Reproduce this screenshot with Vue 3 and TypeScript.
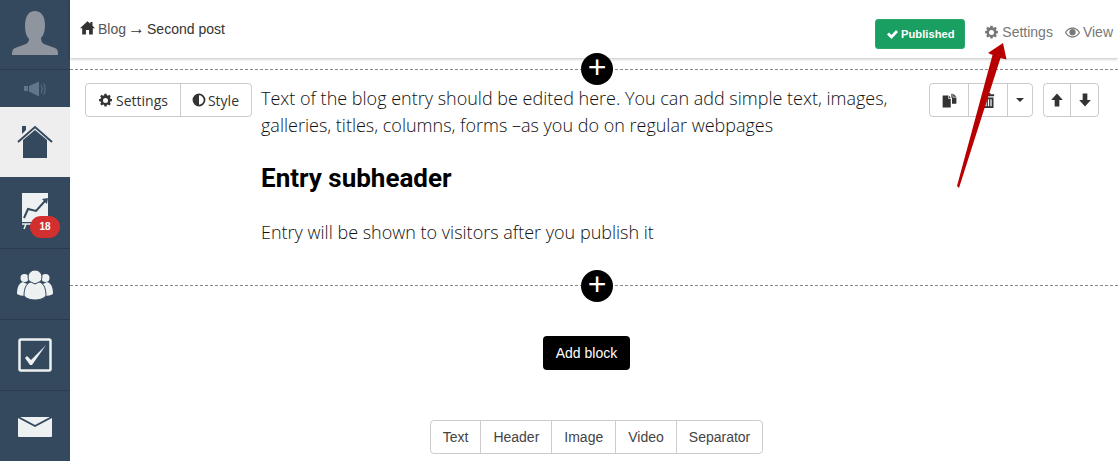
<script setup lang="ts">
const tabs = ['Text', 'Header', 'Image', 'Video', 'Separator'];
const gear =
  'M10.3 1h3.4l.5 2.6 1.7.7 2.2-1.5 2.4 2.4-1.5 2.2.7 1.7 2.6.5v3.4l-2.6.5-.7 1.7 1.5 2.2-2.4 2.4-2.2-1.5-1.7.7-.5 2.6h-3.4l-.5-2.6-1.7-.7-2.2 1.5-2.4-2.4 1.5-2.2-.7-1.7-2.6-.5v-3.4l2.6-.5.7-1.7-1.500-2.2 2.4-2.4 2.2 1.5 1.7-.7zM12 8a4 4 0 1 0 0 8 4 4 0 0 0 0-8z';
</script>

<template>
  <div class="page">
    <aside class="sidebar">
      <div class="side-item avatar">
        <svg width="48" height="46" viewBox="0 0 48 46">
          <path fill="#8e959f" d="M1 45c0-5 1-6 3-7l11-4c2-1 3-3 3-5-3-3-4-8-4-13C14 6 18 1 24 1s10 5 10 14c0 5-1 10-4 13 0 3 1 5 3 6l11 4c2 1 3 2 3 7z" />
        </svg>
      </div>
      <div class="side-item speaker">
        <svg width="22" height="16" viewBox="0 0 22 16">
          <path fill="#62768a" d="M0 5h4v5H0zM5 5l10-4.500v15L5 10.500z" />
          <path fill="none" stroke="#62768a" d="M17 4c1.500 2 1.500 6 0 8M19.500 2.500c2 3 2 8 0 11" />
        </svg>
      </div>
      <div class="side-item active">
        <svg width="36" height="34" viewBox="0 0 36 34">
          <path fill="#34495e" d="M5 1h4v4l-4 4zM6 33V15L18 5l12 10v18z" />
          <path fill="none" stroke="#34495e" stroke-width="2" d="M1 17 18 2l17 15" />
        </svg>
      </div>
      <div class="side-item">
        <svg width="28" height="40" viewBox="0 0 28 40">
          <path fill="#edf1f2" d="M1 0h26v29H1z" />
          <path fill="none" stroke="#34495e" stroke-width="2" d="M3 25 7 16l8 2 9-10" />
          <path fill="#34495e" d="m21 6 6-1-1 6z" />
          <path fill="none" stroke="#edf1f2" stroke-width="1.500" d="M1 31h9M5 31l-2 5" />
        </svg>
        <span class="badge">18</span>
      </div>
      <div class="side-item">
        <svg width="36" height="31" viewBox="0 0 36 31">
          <g fill="#edf1f2">
            <circle cx="7.500" cy="9" r="4" />
            <circle cx="28.500" cy="9" r="4" />
            <path d="M0 25c0-7 2-11 6-12l4 2-2 12c-3 0-6-1-8-2zM36 25c0-7-2-11-6-12l-4 2 2 12c3 0 6-1 8-2z" />
          </g>
          <circle cx="18" cy="8" r="7" fill="#edf1f2" stroke="#34495e" />
          <path fill="#edf1f2" stroke="#34495e" d="M7 27c0-9 3-13 7-14l4 2 4-2c4 1 7 5 7 14-3 3-7 4-11 4s-8-1-11-4z" />
        </svg>
      </div>
      <div class="side-item">
        <svg width="34" height="34" viewBox="0 0 34 34">
          <rect x="1.500" y="1.500" width="31" height="31" rx="1.500" fill="none" stroke="#edf1f2" stroke-width="2.500" />
          <path fill="#edf1f2" d="m7 20 2-2 4 4L28 7 14 27h-2z" />
        </svg>
      </div>
      <div class="side-item">
        <svg width="34" height="20" viewBox="0 0 34 20">
          <path fill="#edf1f2" d="M0 1v18a1 1 0 0 0 1 1h32a1 1 0 0 0 1-1V1L17 10z" />
          <path fill="#edf1f2" d="M2 0h30L17 8z" />
        </svg>
      </div>
    </aside>

    <main class="main">
      <header class="topbar">
        <div class="crumbs">
          <svg class="ic home-ic" viewBox="0 0 24 24">
            <path d="M12 2 0 13h3.500v10h6v-7h5v7h6V13H24l-4-3.700V3h-3.500v3z" />
          </svg>
          <a class="crumb-link">Blog</a>
          <span class="crumb-arrow">&#8594;</span>
          <span>Second post</span>
        </div>
        <div class="top-actions">
          <button class="published">
            <svg class="ic" viewBox="0 0 24 24"><path d="m2 13 4-4 5 5L20 4l4 4-13 14z" /></svg>
            Published
          </button>
          <a class="top-link top-settings">
            <svg class="ic ic-15" viewBox="0 0 24 24"><path fill-rule="evenodd" :d="gear" /></svg>
            Settings
          </a>
          <a class="top-link">
            <svg class="ic ic-15" viewBox="0 0 24 24">
              <path fill-rule="evenodd" d="M12 4C6 4 2 8 0 12c2 4 6 8 12 8s10-4 12-8c-2-4-6-8-12-8zm0 2c4.500 0 8 2.500 10 6-2 3.500-5.500 6-10 6S4 15.500 2 12c2-3.500 5.500-6 10-6z" />
              <circle cx="12" cy="11.500" r="5" />
            </svg>
            View
          </a>
        </div>
      </header>

      <section class="block">
        <span class="plus plus-top">+</span>
        <div class="group tools-left">
          <button class="btn settings-btn">
            <svg class="ic ic-15" viewBox="0 0 24 24"><path fill-rule="evenodd" :d="gear" /></svg>
            Settings
          </button>
          <button class="btn style-btn">
            <svg class="ic ic-14" viewBox="0 0 24 24">
              <path fill-rule="evenodd" d="M12 1a11 11 0 1 0 0 22 11 11 0 0 0 0-22zm0 3a8 8 0 0 1 0 16z" />
            </svg>
            Style
          </button>
        </div>
        <div class="tools-right">
          <div class="group">
            <button class="btn icon-btn btn-39">
              <svg class="ic ic-15" viewBox="0 0 24 24"><path d="M1 4h9v5h4v14H1zM11 4l3 4h-3zM15 1h2v6h6v10h-7V8l-1-1zM18 1l5 5h-5z" /></svg>
            </button>
            <button class="btn icon-btn btn-39">
              <svg class="ic ic-15" viewBox="0 0 24 24"><path d="M9 0h6v2h6v3H3V2h6zM4 7h16v17H4zm3 3v11h2V10zm4 0v11h2V10zm4 0v11h2V10z" fill-rule="evenodd" /></svg>
            </button>
            <button class="btn icon-btn caret-btn"><span class="caret" /></button>
          </div>
          <div class="group">
            <button class="btn icon-btn">
              <svg class="ic ic-14" viewBox="0 0 24 24"><path d="M12 1 22 12h-6v11H8V12H2z" /></svg>
            </button>
            <button class="btn icon-btn">
              <svg class="ic ic-14" viewBox="0 0 24 24"><path d="M12 23 2 12h6V1h8v11h6z" /></svg>
            </button>
          </div>
        </div>
        <div class="entry">
          <p>Text of the blog entry should be edited here. You can add simple text, images, galleries, titles, columns, forms &#8211;as you do on regular webpages</p>
          <h2>Entry subheader</h2>
          <p>Entry will be shown to visitors after you publish it</p>
        </div>
      </section>

      <section class="add-area">
        <span class="plus plus-add">+</span>
        <button class="add-btn">Add block</button>
        <div class="group tabs">
          <button v-for="tab in tabs" :key="tab" class="btn tab">{{ tab }}</button>
        </div>
      </section>
    </main>

    <svg class="arrow" width="60" height="150" viewBox="0 0 60 150">
      <path fill="#b80000" d="M47 1 32 11l4.500 2L1 144l2 2 41.500-130 6 1.500z" />
    </svg>
  </div>
</template>

<style>
html,
body {
  margin: 0;
  overflow: hidden;
  background: #fff;
}
</style>

<style scoped>
.page {
  position: relative;
  display: flex;
  height: 461px;
  overflow: hidden;
  font-family: 'Liberation Sans', Arial, sans-serif;
  font-size: 14px;
  color: #333;
}

.sidebar {
  width: 70px;
  flex: none;
  display: flex;
  flex-direction: column;
  background: #34495e;
}

.side-item {
  position: relative;
  height: 71px;
  flex: none;
  box-sizing: border-box;
  display: flex;
  align-items: center;
  justify-content: center;
  border-bottom: 1px solid #2b3c4f;
}

.side-item:last-child {
  border-bottom: 0;
}

.avatar {
  height: 70px;
  align-items: flex-end;
  padding-bottom: 13px;
}

.speaker {
  height: 37px;
  border-bottom: 0;
}

.active {
  background: #eee;
  border-bottom-color: #34495e;
}

.badge {
  position: absolute;
  left: 30px;
  top: 38px;
  width: 30px;
  height: 22px;
  border-radius: 11px;
  background: #d32f2f;
  color: #fff;
  font-size: 10px;
  font-weight: 700;
  line-height: 22px;
  text-align: center;
}

.main {
  flex: 1;
  min-width: 0;
}

.topbar {
  height: 58px;
  box-sizing: border-box;
  display: flex;
  justify-content: space-between;
  padding: 19px 5px 0 10px;
  box-shadow: 0 1px 3px rgba(0, 0, 0, 0.25);
}

.crumbs {
  display: flex;
  align-items: center;
  gap: 4px;
  height: 20px;
}

.crumb-link {
  color: #555;
}

.crumb-arrow {
  margin: 0 -2px;
  font-size: 17px;
  line-height: 20px;
}

.ic {
  width: 12px;
  height: 12px;
  fill: currentColor;
  flex: none;
}

.ic-14 {
  width: 14px;
  height: 14px;
}

.ic-15 {
  width: 15px;
  height: 15px;
}

.home-ic {
  width: 15px;
  height: 15px;
  margin: -3px -1px 0 0;
}

.top-actions {
  display: flex;
  align-items: flex-start;
}

.published {
  width: 90px;
  height: 30px;
  display: flex;
  align-items: center;
  justify-content: center;
  gap: 3px;
  padding: 0;
  border: 1px solid #2aa868;
  border-radius: 3px;
  background: #1a9f63;
  color: #fff;
  font: 700 11.2px 'Liberation Sans', Arial, sans-serif;
}

.top-link {
  display: flex;
  align-items: center;
  gap: 3px;
  height: 26px;
  color: #777;
}

.top-settings {
  margin: 0 12px 0 19px;
}

.block {
  position: relative;
  margin-top: 11px;
  height: 217px;
  box-sizing: border-box;
  border-top: 1px dashed #888;
  border-bottom: 1px dashed #888;
}

.plus {
  position: absolute;
  left: 511px;
  width: 32px;
  height: 32px;
  border-radius: 50%;
  background: #000;
  color: #fff;
  font: 400 32px/29px 'Liberation Sans', Arial, sans-serif;
  text-align: center;
}

.plus-top {
  top: -17px;
}

.plus-add {
  top: -16px;
}

.group {
  display: inline-flex;
  height: 34px;
  box-sizing: border-box;
  border: 1px solid #ccc;
  border-radius: 4px;
  background: #fff;
}

.btn {
  display: flex;
  align-items: center;
  gap: 4px;
  padding: 0 12px;
  border: 0;
  border-right: 1px solid #ccc;
  background: transparent;
  color: #333;
  font: 400 14px 'Open Sans', sans-serif;
}

.btn:last-child {
  border-right: 0;
}

.settings-btn {
  gap: 3px;
}

.style-btn {
  gap: 2px;
  padding: 0 12px 0 11px;
}

.tools-left {
  position: absolute;
  left: 15px;
  top: 13px;
}

.tools-right {
  position: absolute;
  left: 859px;
  top: 13px;
  display: flex;
  gap: 10px;
}

.icon-btn {
  width: 27px;
  padding: 0;
  justify-content: center;
}

.btn-39 {
  width: 39px;
}

.caret-btn {
  width: 24px;
}

.caret {
  width: 0;
  height: 0;
  border-top: 4px solid #333;
  border-left: 4px solid transparent;
  border-right: 4px solid transparent;
}

.entry {
  width: 650px;
  margin-left: 191px;
  padding-top: 15px;
  font: 300 18px/27px 'Open Sans', sans-serif;
  color: #111;
}

.entry p {
  margin: 0;
}

.entry h2 {
  margin: 24px 0 26px;
  font: 700 26px/30px Roboto, sans-serif;
  color: #000;
}

.add-area {
  position: relative;
  display: flex;
  flex-direction: column;
  align-items: center;
}

.add-btn {
  width: 87px;
  height: 34px;
  margin: 50px 0 0 -15px;
  padding: 0;
  border: 0;
  border-radius: 4px;
  background: #000;
  color: #fff;
  font: 400 14px 'Liberation Sans', Arial, sans-serif;
}

.tabs {
  margin: 50px 0 0 5px;
}

.tab {
  font-family: 'Liberation Sans', Arial, sans-serif;
  color: #444;
}

.arrow {
  position: absolute;
  left: 956px;
  top: 42px;
}
</style>
